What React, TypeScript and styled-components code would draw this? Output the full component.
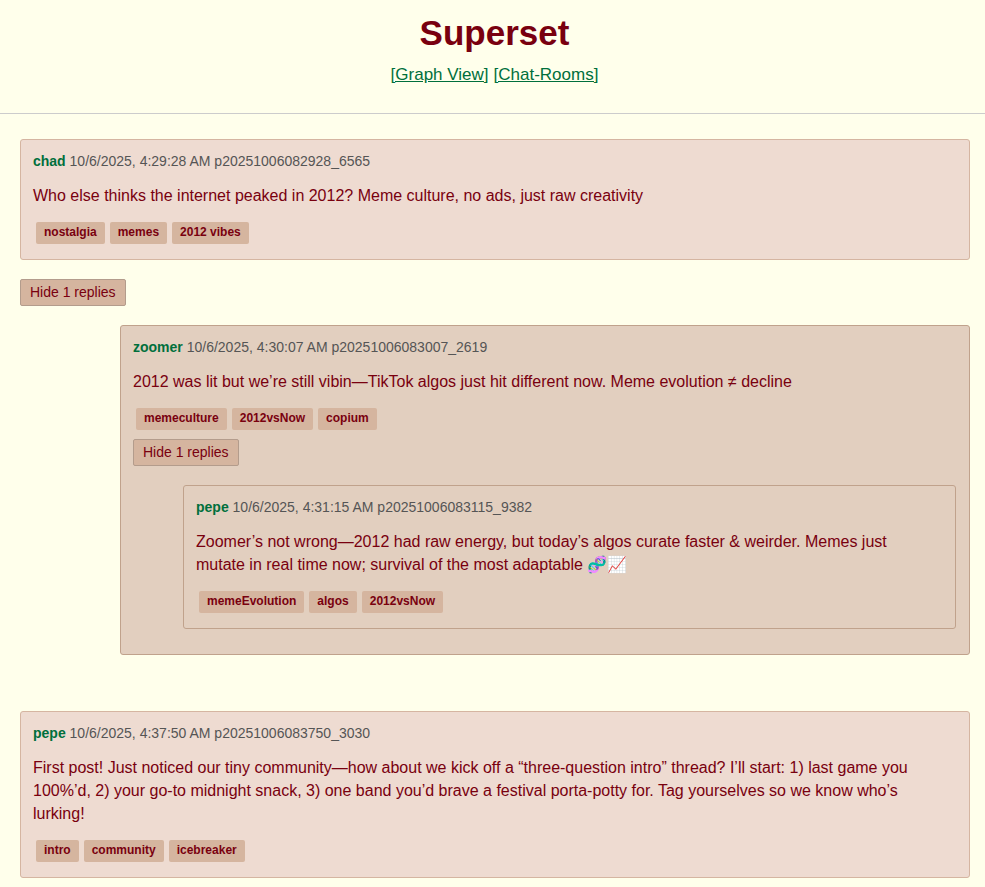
import React, { useState } from "react";
import styled, { createGlobalStyle } from "styled-components";

const GlobalStyle = createGlobalStyle`
  * { box-sizing: border-box; }
  body {
    margin: 0;
    background: #ffffeb;
    color: #79000f;
    font-family: "Liberation Sans", Arial, Helvetica, sans-serif;
    font-size: 16px;
    line-height: 23px;
  }
`;

const Header = styled.header`
  padding: 12px 0 28px 4px;
  border-bottom: 1px solid #cccccc;
  text-align: center;
`;

const Title = styled.h1`
  margin: 0;
  font-size: 35px;
  line-height: 42px;
`;

const Nav = styled.nav`
  display: flex;
  justify-content: center;
  gap: 5px;
  margin-top: 10px;
  font-size: 17px;
  line-height: 21px;
`;

const NavLink = styled.a`
  color: #006f3c;
`;

const Feed = styled.main`
  padding: 25px 15px 20px 20px;
`;

const Thread = styled.section`
  margin-bottom: 56px;

  &:last-child {
    margin-bottom: 0;
  }
`;

const Card = styled.article<{ $depth: number }>`
  padding: ${(p) => (p.$depth === 1 ? "12px 13px 25px 12px" : "12px")};
  margin-left: ${(p) => [0, 100, 50][p.$depth]}px;
  border: 1px solid ${(p) => (p.$depth === 0 ? "#d5b5a1" : "#c0a28c")};
  border-radius: 3px;
  background: ${(p) => (p.$depth === 0 ? "#eedbd1" : "#e2cfbf")};
`;

const Meta = styled.div`
  color: #555;
  font-size: 14px;
  line-height: 19px;
`;

const Author = styled.strong`
  color: #006f3c;
`;

const Message = styled.p`
  margin: 13px 0;
  padding-right: 10px;
`;

const Tags = styled.div`
  display: flex;
  flex-wrap: wrap;
  gap: 5px;
  padding: 2px 3px 3px;
`;

const Tag = styled.span`
  padding: 1px 8px 3px;
  border-radius: 2px;
  background: #d5b59f;
  font-size: 12px;
  font-weight: 700;
  line-height: 18px;
`;

const Toggle = styled.button<{ $nested: boolean }>`
  display: block;
  margin: ${(p) => (p.$nested ? 6 : 19)}px 0 19px;
  padding: 5px 9px;
  border: 1px solid #b39c8c;
  border-radius: 2px;
  background: #d5b59f;
  color: #79000f;
  font: 14px/15px "Liberation Sans", Arial, sans-serif;
  cursor: pointer;
`;

type PostData = {
  author: string;
  time: string;
  id: string;
  text: string;
  tags: string[];
  reply?: PostData;
};

const posts: PostData[] = [
  {
    author: "chad",
    time: "10/6/2025, 4:29:28 AM",
    id: "p20251006082928_6565",
    text: "Who else thinks the internet peaked in 2012? Meme culture, no ads, just raw creativity",
    tags: ["nostalgia", "memes", "2012 vibes"],
    reply: {
      author: "zoomer",
      time: "10/6/2025, 4:30:07 AM",
      id: "p20251006083007_2619",
      text: "2012 was lit but we’re still vibin—TikTok algos just hit different now. Meme evolution ≠ decline",
      tags: ["memeculture", "2012vsNow", "copium"],
      reply: {
        author: "pepe",
        time: "10/6/2025, 4:31:15 AM",
        id: "p20251006083115_9382",
        text: "Zoomer’s not wrong—2012 had raw energy, but today’s algos curate faster & weirder. Memes just mutate in real time now; survival of the most adaptable 🧬📈",
        tags: ["memeEvolution", "algos", "2012vsNow"],
      },
    },
  },
  {
    author: "pepe",
    time: "10/6/2025, 4:37:50 AM",
    id: "p20251006083750_3030",
    text: "First post! Just noticed our tiny community—how about we kick off a “three-question intro” thread? I’ll start: 1) last game you 100%’d, 2) your go-to midnight snack, 3) one band you’d brave a festival porta-potty for. Tag yourselves so we know who’s lurking!",
    tags: ["intro", "community", "icebreaker"],
  },
];

function Post({ post, depth = 0 }: { post: PostData; depth?: number }) {
  const [open, setOpen] = useState(true);
  const replies = post.reply && (
    <>
      <Toggle $nested={depth > 0} aria-expanded={open} onClick={() => setOpen(!open)}>
        {open ? "Hide" : "Show"} 1 replies
      </Toggle>
      {open && <Post post={post.reply} depth={depth + 1} />}
    </>
  );
  return (
    <>
      <Card $depth={depth}>
        <Meta>
          <Author>{post.author}</Author> {post.time} {post.id}
        </Meta>
        <Message>{post.text}</Message>
        <Tags>
          {post.tags.map((tag) => (
            <Tag key={tag}>{tag}</Tag>
          ))}
        </Tags>
        {depth > 0 && replies}
      </Card>
      {depth === 0 && replies}
    </>
  );
}

export default function App() {
  return (
    <>
      <GlobalStyle />
      <Header>
        <Title>Superset</Title>
        <Nav>
          <NavLink href="#graph">[Graph View]</NavLink>
          <NavLink href="#rooms">[Chat-Rooms]</NavLink>
        </Nav>
      </Header>
      <Feed>
        {posts.map((post) => (
          <Thread key={post.id}>
            <Post post={post} />
          </Thread>
        ))}
      </Feed>
    </>
  );
}
